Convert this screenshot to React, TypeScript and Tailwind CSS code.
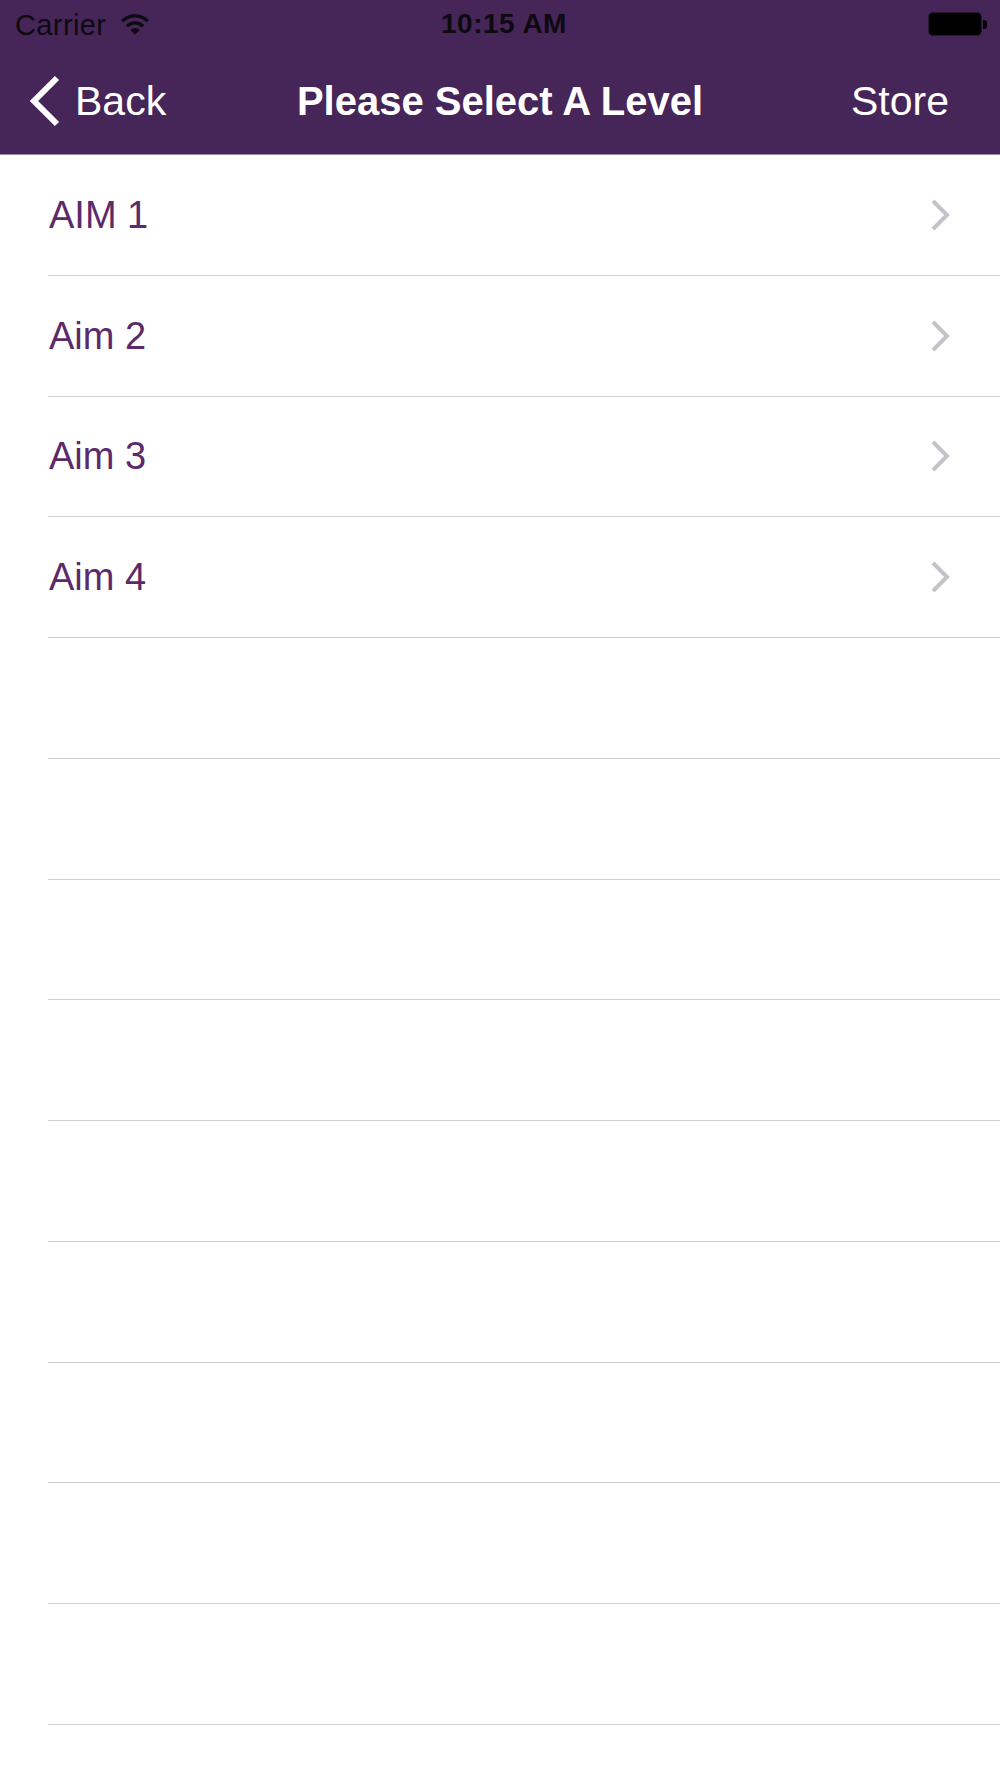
const levels = ["AIM 1", "Aim 2", "Aim 3", "Aim 4"];

const rows = [...levels, ...Array(10).fill("")];

const WifiIcon = () => (
  <svg width="28" height="22" viewBox="0 0 28 22">
    <path d="M1.2 8.2 A18 18 0 0 1 26.8 8.2" stroke="#0d0a10" strokeWidth="3.4" fill="none" />
    <path d="M6 13.2 A11.3 11.3 0 0 1 22 13.2" stroke="#0d0a10" strokeWidth="3.4" fill="none" />
    <path d="M14 21.5 L9.4 16.9 A6.5 6.5 0 0 1 18.6 16.9 Z" fill="#0d0a10" />
  </svg>
);

const Battery = () => (
  <div className="flex items-center">
    <div className="w-[54px] h-[24px] rounded-[5px] bg-black border-[1.5px] border-[#2b1733]" />
    <div className="w-[4px] h-[9px] rounded-r-[3px] bg-black ml-[1px]" />
  </div>
);

const BackChevron = () => (
  <svg width="32" height="52" viewBox="0 0 32 52">
    <path d="M28 3 L5 26 L28 49" stroke="white" strokeWidth="6" fill="none" />
  </svg>
);

const RowChevron = () => (
  <svg width="20" height="32" viewBox="0 0 20 32">
    <path d="M2 2 L16 16 L2 30" stroke="#c4c3c9" strokeWidth="4" fill="none" />
  </svg>
);

export default function App() {
  return (
    <div
      className="w-[1000px] h-[1778px] overflow-hidden bg-white"
      style={{ fontFamily: '"Liberation Sans", Arial, sans-serif' }}
    >
      <header className="bg-[#462558] border-b border-[#9c8ea3]">
        {/* status bar */}
        <div className="h-[48px] flex items-center">
          <div className="flex-1 flex items-center pl-[15px]">
            <span className="text-[29px] leading-none tracking-[0.4px] text-[#0d0a10] pt-[3px]">Carrier</span>
            <span className="ml-[15px]">
              <WifiIcon />
            </span>
          </div>
          <div className="flex-1 flex justify-center">
            <span className="text-[28px] leading-none tracking-[0.5px] font-bold text-[#0d0a10] pl-[6px]">
              10:15 AM
            </span>
          </div>
          <div className="flex-1 flex justify-end pr-[13px]">
            <Battery />
          </div>
        </div>
        {/* nav bar */}
        <div className="h-[106px] flex items-center">
          <div className="flex-1 basis-0 flex items-center pl-[29px]">
            <BackChevron />
            <span className="ml-[14px] text-[41px] leading-none text-white">Back</span>
          </div>
          <h1 className="ml-[22px] text-[40px] leading-none font-bold text-white whitespace-nowrap">
            Please Select A Level
          </h1>
          <div className="flex-1 basis-0 flex justify-end pr-[51px]">
            <span className="text-[41px] leading-none text-white">Store</span>
          </div>
        </div>
      </header>

      <ul className="pl-[48px]">
        {rows.map((label, i) => (
          <li
            key={i}
            className="h-[120.75px] flex items-center justify-between border-b border-[#cfced3] pr-[49px]"
          >
            <span className="text-[38px] leading-none text-[#5b2a6b] pl-[1px]">{label}</span>
            {label && <RowChevron />}
          </li>
        ))}
      </ul>
    </div>
  );
}
